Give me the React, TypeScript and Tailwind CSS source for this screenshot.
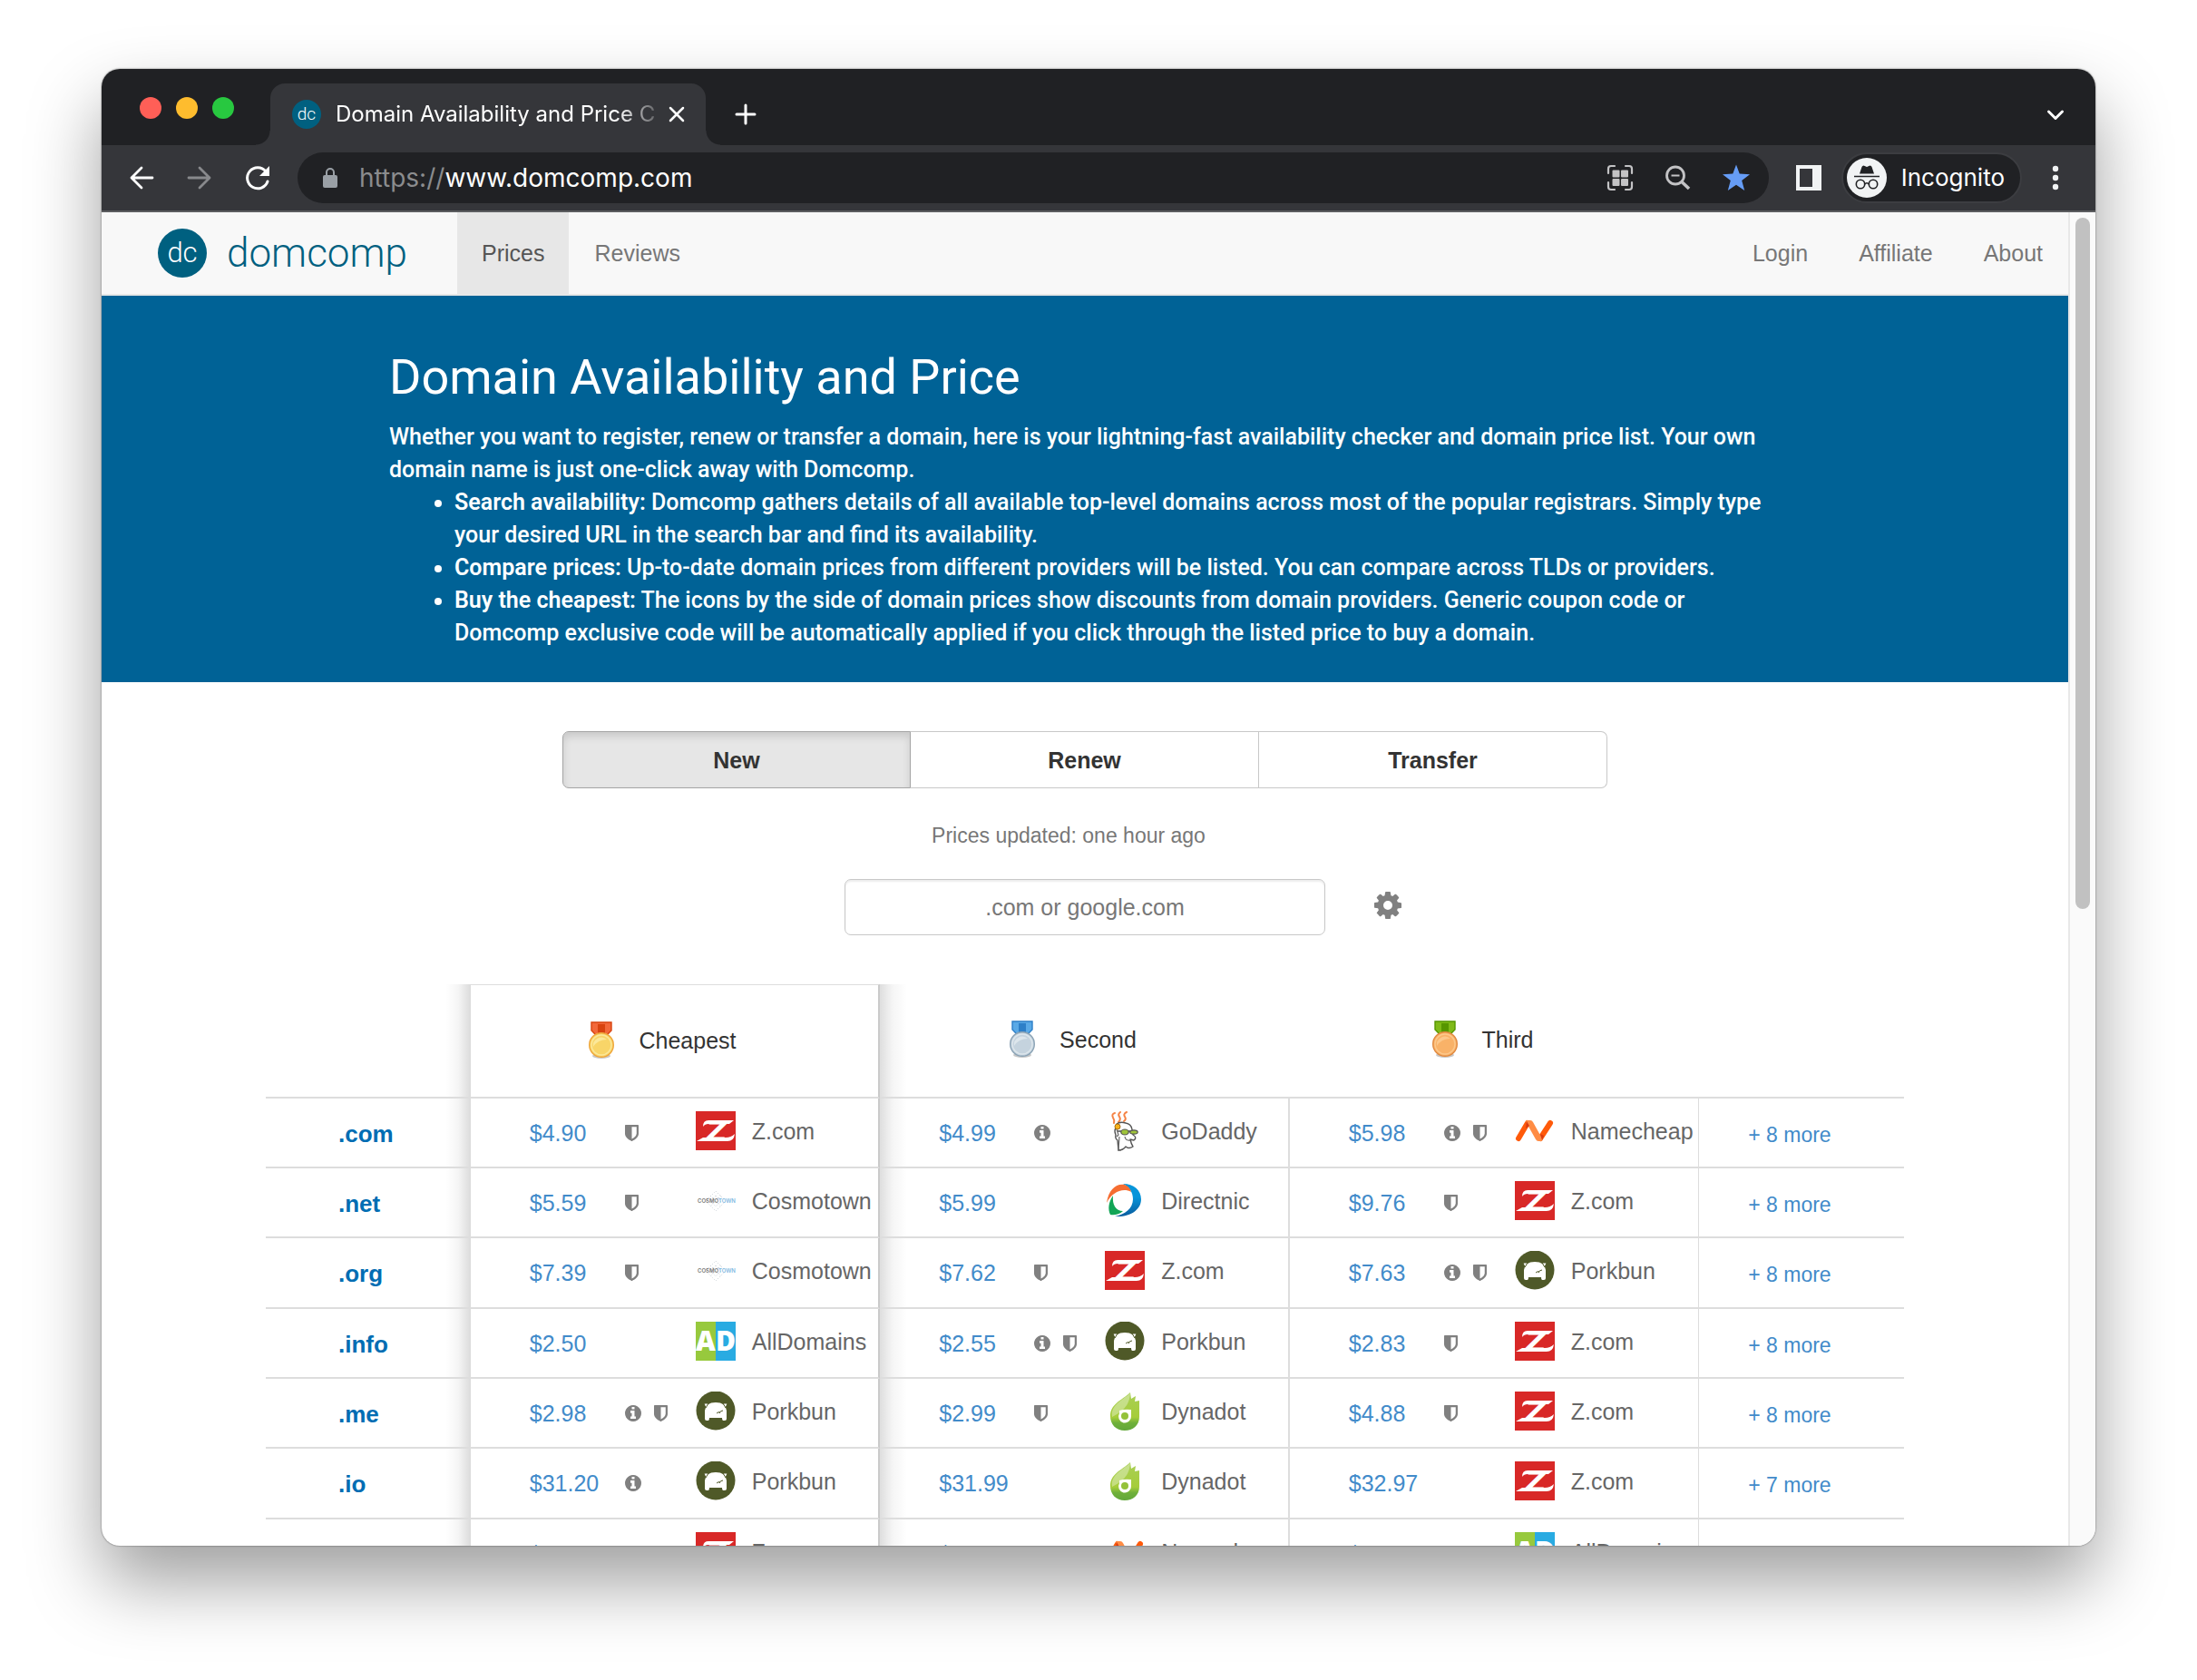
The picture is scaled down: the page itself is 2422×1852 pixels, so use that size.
import React from "react";

type Provider = "Z.com" | "Cosmotown" | "AllDomains" | "Porkbun" | "GoDaddy" | "Directnic" | "Dynadot" | "Namecheap";
type Offer = { price: string; info?: boolean; shield?: boolean; by: Provider };
type Row = { tld: string; offers: Offer[]; more: string };

const rows: Row[] = [
  {
    tld: ".com",
    offers: [
      { price: "$4.90", shield: true, by: "Z.com" },
      { price: "$4.99", info: true, by: "GoDaddy" },
      { price: "$5.98", info: true, shield: true, by: "Namecheap" },
    ],
    more: "+ 8 more",
  },
  {
    tld: ".net",
    offers: [
      { price: "$5.59", shield: true, by: "Cosmotown" },
      { price: "$5.99", by: "Directnic" },
      { price: "$9.76", shield: true, by: "Z.com" },
    ],
    more: "+ 8 more",
  },
  {
    tld: ".org",
    offers: [
      { price: "$7.39", shield: true, by: "Cosmotown" },
      { price: "$7.62", shield: true, by: "Z.com" },
      { price: "$7.63", info: true, shield: true, by: "Porkbun" },
    ],
    more: "+ 8 more",
  },
  {
    tld: ".info",
    offers: [
      { price: "$2.50", by: "AllDomains" },
      { price: "$2.55", info: true, shield: true, by: "Porkbun" },
      { price: "$2.83", shield: true, by: "Z.com" },
    ],
    more: "+ 8 more",
  },
  {
    tld: ".me",
    offers: [
      { price: "$2.98", info: true, shield: true, by: "Porkbun" },
      { price: "$2.99", shield: true, by: "Dynadot" },
      { price: "$4.88", shield: true, by: "Z.com" },
    ],
    more: "+ 8 more",
  },
  {
    tld: ".io",
    offers: [
      { price: "$31.20", info: true, by: "Porkbun" },
      { price: "$31.99", by: "Dynadot" },
      { price: "$32.97", by: "Z.com" },
    ],
    more: "+ 7 more",
  },
  {
    tld: ".biz",
    offers: [
      { price: "$4.99", by: "Z.com" },
      { price: "$4.99", by: "Namecheap" },
      { price: "$8.99", by: "AllDomains" },
    ],
    more: "+ 8 more",
  },
];

const ZLogo = () => (
  <svg viewBox="0 0 44 44" className="size-11">
    <rect width="44" height="43" fill="#d82827" />
    <text x="23" y="33" textAnchor="middle" fontFamily="DejaVu Sans" fontWeight="700" fontStyle="italic" fontSize="32" fill="#fff">
      Z
    </text>
    <path d="M8 17Q8 10 14 10H24V14H14Q10 14 8 17Z" fill="#fff" />
    <path d="M28 10H42L37 14H28Z" fill="#fff" />
    <path d="M1 33 8 29H18V33Z" fill="#fff" />
    <path d="M24 29H33Q39 29 43 25Q42 33 35 33H24Z" fill="#fff" />
  </svg>
);

const CosmotownLogo = () => (
  <svg viewBox="0 0 44 44" className="size-11">
    <g fill="none" stroke="#c9d0d6" strokeWidth="1" strokeDasharray="1 2">
      <path d="M22 11 33 22 22 33 11 22Z" />
      <path d="M16 16 28 28M28 16 16 28M22 16 28 22 22 28 16 22Z" />
    </g>
    <text x="2" y="24" fontFamily="Inter" fontWeight="600" fontSize="6" fill="#777">
      COSMO
      <tspan fill="#7fb8e2">TOWN</tspan>
    </text>
  </svg>
);

const AllDomainsLogo = () => (
  <svg viewBox="0 0 44 44" className="size-11">
    <rect width="22" height="43" fill="#97c93d" />
    <rect x="22" width="22" height="43" fill="#29abe2" />
    <text x="22" y="32" textAnchor="middle" fontFamily="Open Sans" fontWeight="800" fontSize="30" fill="#fff">
      AD
    </text>
  </svg>
);

const PorkbunLogo = () => (
  <svg viewBox="0 0 44 44" className="size-11">
    <circle cx="22" cy="21" r="21.5" fill="#4f5928" />
    <path d="M10 21Q11 12 22 12 33 12 34 21V30Q34 32 32 32H30Q29 32 29 29H15Q15 32 14 32H12Q10 32 10 30Z" fill="#fff" />
    <path d="M23 24q2-2 4-1M26 24q1-3 4-3" fill="none" stroke="#4f5928" strokeWidth="1" />
    <path d="M9 13 14 13 11 18ZM35 13 30 13 33 18Z" fill="#fff" stroke="#4f5928" strokeWidth="1" />
  </svg>
);

const GoDaddyLogo = () => (
  <svg viewBox="0 0 44 44" className="size-11">
    <g fill="none" stroke="#f58345" strokeWidth="2" strokeLinecap="round">
      <path d="M11 2q-4 1-2 5 2 3 1 6" />
      <path d="M17 1q-3 2-1 5 2 3-1 6" />
      <path d="M24 1q-4 2-2 5 2 3-1 5" />
    </g>
    <path
      d="M13 14Q17 11 23 13 29 14 30 20L31 26Q36 29 32 32L28 31Q29 36 31 39 26 42 23 39 20 43 15 43L14 32Q11 30 12 26 10 22 12 18Z"
      fill="#fff"
      stroke="#555"
      strokeWidth="1.4"
      strokeLinejoin="round"
    />
    <path d="M22 28q1 5 6 4M16 28l-1 14M14 43h4M13 20l2 6-2 2" fill="none" stroke="#666" strokeWidth="1.2" />
    <path d="M14 22h22" stroke="#555" strokeWidth="1.6" />
    <ellipse cx="22" cy="23" rx="4.2" ry="3" fill="#9fc43a" stroke="#555" strokeWidth="1.2" />
    <ellipse cx="32" cy="23" rx="4.2" ry="2.2" fill="#9fc43a" stroke="#555" strokeWidth="1.2" />
    <circle cx="14" cy="17" r="3" fill="#f6b21b" stroke="#a86d10" strokeWidth="1" />
  </svg>
);

const DirectnicLogo = () => (
  <svg viewBox="0 0 44 44" className="size-11">
    <defs>
      <linearGradient id="dn-blue" x1="0" y1="0" x2="0" y2="1">
        <stop offset="0.4" stopColor="#0795da" />
        <stop offset="1" stopColor="#0a5c9e" />
      </linearGradient>
    </defs>
    <path d="M20 3C32 3 40 10 40 20 40 31 29 40 11 39 22 37 31 30 31 20 31 12 27 7 20 3Z" fill="url(#dn-blue)" />
    <path d="M2 24C4 9 13 2 22 4 26 6 28 8 29 12 20 7 8 12 2 24Z" fill="#f66d31" />
    <path d="M9 16C8 26 12 33 20 33 16 37 10 38 6 37 3 31 4 23 9 16Z" fill="#12a556" />
  </svg>
);

const DynadotLogo = () => (
  <svg viewBox="0 0 44 44" className="size-11">
    <defs>
      <linearGradient id="dd-drop" x1="0" y1="0" x2="0" y2="1">
        <stop offset="0" stopColor="#a9cf55" />
        <stop offset="0.65" stopColor="#a6cd3a" />
        <stop offset="0.8" stopColor="#6fb03a" />
        <stop offset="1" stopColor="#62a73a" />
      </linearGradient>
    </defs>
    <path d="M28 1 29 8 34 5 33 11 38 10V28C38 37 31 43 22 43 12 43 6 36 6 27 6 14 18 10 28 1Z" fill="url(#dd-drop)" />
    <path d="M28 2C27 12 24 20 8 28 6 16 18 10 28 2Z" fill="#fff" fillOpacity="0.35" />
    <path d="M16 21Q22 19 29 20V27A7 7 0 1 1 16 24Z" fill="#fff" />
    <circle cx="22" cy="27" r="4" fill="#94c23a" />
  </svg>
);

const NamecheapLogo = () => (
  <svg viewBox="0 0 44 44" className="size-11">
    <g fill="none" strokeLinecap="round" strokeWidth="6">
      <path d="M28 30 39 13" stroke="#ff5a0a" />
      <path d="M4 30 14 13" stroke="#ff5a0a" />
    </g>
    <path d="M12 10H17Q19 10 20 12L30 30Q31 33 29 33H26Q24 33 23 31L14 15Q12 12 12 10Z" fill="#ff8c44" />
    <path d="M13 11 16 16 12 19Z" fill="#d93b12" />
    <path d="M32 27 28 25 30 32Z" fill="#d93b12" />
  </svg>
);

const logos: Record<Provider, () => React.ReactElement> = {
  "Z.com": ZLogo,
  Cosmotown: CosmotownLogo,
  AllDomains: AllDomainsLogo,
  Porkbun: PorkbunLogo,
  GoDaddy: GoDaddyLogo,
  Directnic: DirectnicLogo,
  Dynadot: DynadotLogo,
  Namecheap: NamecheapLogo,
};

const InfoIcon = () => (
  <svg viewBox="128 128 1536 1536" className="size-[18px] fill-[#808080]">
    <path d="M1152 1376v-160q0-14-9-23t-23-9h-96v-512q0-14-9-23t-23-9h-320q-14 0-23 9t-9 23v160q0 14 9 23t23 9h96v320h-96q-14 0-23 9t-9 23v160q0 14 9 23t23 9h448q14 0 23-9t9-23zm-128-896v-160q0-14-9-23t-23-9h-192q-14 0-23 9t-9 23v160q0 14 9 23t23 9h192q14 0 23-9t9-23zm640 416q0 209-103 385.5t-279.5 279.5-385.5 103-385.5-103-279.5-279.5-103-385.5 103-385.5 279.5-279.5 385.5-103 385.5 103 279.5 279.5 103 385.5z" />
  </svg>
);

const ShieldIcon = () => (
  <svg viewBox="256 128 1280 1536" className="h-[18px] w-[15px] fill-[#808080]">
    <path d="M1344 960v-640h-448v1137q119-63 213-137 235-184 235-360zm192-768v768q0 86-33.5 170.5t-83 150-118 127.5-126.5 103-121 77.5-89.5 49.5-42.5 20q-12 6-26 6t-26-6q-16-7-42.5-20t-89.5-49.5-121-77.5-126.5-103-118-127.5-83-150-33.5-170.5v-768q0-26 19-45t45-19h1152q26 0 45 19t19 45z" />
  </svg>
);

const GearIcon = () => (
  <svg viewBox="0 128 1536 1536" className="size-[30px] fill-[#808080]">
    <path d="M1024 896q0-106-75-181t-181-75-181 75-75 181 75 181 181 75 181-75 75-181zm512-109v222q0 12-8 23t-20 13l-185 28q-19 54-39 91 35 50 107 138 10 12 10 25t-9 23q-27 37-99 108t-94 71q-12 0-26-9l-138-108q-44 23-91 38-16 136-29 186-7 28-36 28h-222q-14 0-24.500-8.500t-11.500-21.500l-28-184q-49-16-90-37l-141 107q-10 9-25 9-14 0-25-11-126-114-165-168-7-10-7-23 0-12 8-23 15-21 51-66.500t54-70.500q-27-50-41-99l-183-27q-13-2-21-12.500t-8-23.500v-222q0-12 8-23t19-13l186-28q14-46 39-92-40-57-107-138-10-12-10-24 0-10 9-23 26-36 98.500-107.500t94.500-71.500q13 0 26 10l138 107q44-23 91-38 16-136 29-186 7-28 36-28h222q14 0 24.500 8.500t11.500 21.500l28 184q49 16 90 37l142-107q9-9 24-9 13 0 25 10 129 119 165 170 7 8 7 22 0 12-8 23-15 21-51 66.500t-54 70.500q26 50 41 98l183 28q13 2 21 12.500t8 23.500z" />
  </svg>
);

type MedalColors = { ribbon: string; ribbonDark: string; disc: string; discLight: string; rim: string };

const Medal = ({ ribbon, ribbonDark, disc, discLight, rim }: MedalColors) => (
  <svg viewBox="0 0 30 42" className="h-[42px] w-[30px]">
    <ellipse cx="15" cy="38" rx="10" ry="3" fill="#000" fillOpacity="0.22" />
    <path d="M4 1H26V10L21 15H9L4 10Z" fill={ribbon} stroke={ribbonDark} strokeWidth="1.4" />
    <rect x="11" y="3" width="8" height="10" fill={ribbonDark} />
    <circle cx="15" cy="26" r="13.3" fill={disc} stroke={rim} strokeWidth="1.4" />
    <circle cx="15" cy="26" r="11" fill={disc} stroke={discLight} strokeWidth="1.4" />
    <path d="M6 28A9 9 0 0 1 21 20Q11 20 6 28Z" fill={discLight} />
  </svg>
);

const medals: { label: string; colors: MedalColors }[] = [
  { label: "Cheapest", colors: { ribbon: "#f2683a", ribbonDark: "#d8430f", disc: "#f8d568", discLight: "#fbe89a", rim: "#efa63c" } },
  { label: "Second", colors: { ribbon: "#5aa9e6", ribbonDark: "#2d7fc8", disc: "#c5d3de", discLight: "#dde6ec", rim: "#8ba3b5" } },
  { label: "Third", colors: { ribbon: "#7fba18", ribbonDark: "#569600", disc: "#f9b268", discLight: "#fcc88c", rim: "#e08a42" } },
];

const columnEdge = [
  "border-r-2 border-r-[#cacaca]",
  "border-r-2 border-r-[#dddddd] bg-[linear-gradient(to_right,rgba(0,0,0,0.13),rgba(0,0,0,0.04)_14px,transparent_30px)]",
  "border-r border-r-[#dddddd]",
];

const OfferCell = ({ offer, edge }: { offer: Offer; edge: string }) => {
  const Logo = logos[offer.by];
  return (
    <td className={`border-b-2 border-b-[#dddddd] p-0 align-middle ${edge}`}>
      <div className="flex items-center">
        <a href="#price" className="w-[170px] shrink-0 pl-[65px] text-[25px] leading-[36px] text-[#428bca]">
          {offer.price}
        </a>
        <span className="flex w-[78px] shrink-0 items-center gap-[14px]">
          {offer.info && <InfoIcon />}
          {offer.shield && <ShieldIcon />}
        </span>
        <span className="flex items-center gap-[18px] pb-[4px] text-[25px] leading-[44px] text-[#666666]">
          <Logo />
          {offer.by}
        </span>
      </div>
    </td>
  );
};

const TabStrip = () => (
  <div className="flex h-[84px] items-end bg-[#202124]">
    <div className="flex w-[186px] shrink-0 items-center gap-4 self-center pt-[2px] pl-[42px]">
      <button aria-label="Close window" className="size-6 rounded-full bg-[#ff5f57]" />
      <button aria-label="Minimise window" className="size-6 rounded-full bg-[#febc2e]" />
      <button aria-label="Zoom window" className="size-6 rounded-full bg-[#28c840]" />
    </div>
    <div className="relative flex h-[68px] w-[480px] items-center rounded-t-[16px] bg-[#35363a] pl-6">
      <span className="absolute bottom-0 -left-4 size-4 bg-[radial-gradient(circle_at_0_0,#202124_15px,#35363a_16px)]" />
      <span className="absolute -right-4 bottom-0 size-4 bg-[radial-gradient(circle_at_100%_0,#202124_15px,#35363a_16px)]" />
      <span className="flex size-8 shrink-0 items-center justify-center rounded-full bg-[#006080] font-[Roboto] text-[19px] leading-6 font-light text-white">
        dc
      </span>
      <span className="ml-4 w-[352px] overflow-hidden font-[Inter] text-[24px] leading-8 whitespace-nowrap text-white [mask-image:linear-gradient(to_right,black_310px,transparent_366px)]">
        Domain Availability and Price C
      </span>
      <button aria-label="Close tab" className="ml-[14px]">
        <svg viewBox="0 0 20 20" className="size-5 stroke-white" strokeWidth="2.5" strokeLinecap="round">
          <path d="M3 3 17 17M17 3 3 17" />
        </svg>
      </button>
    </div>
    <button aria-label="New tab" className="mb-[22px] ml-8">
      <svg viewBox="0 0 24 24" className="size-6 stroke-white" strokeWidth="3" strokeLinecap="round">
        <path d="M12 2V22M2 12H22" />
      </svg>
    </button>
    <button aria-label="Search tabs" className="mr-[32px] mb-[22px] ml-auto">
      <svg viewBox="0 0 24 24" className="size-6 fill-none stroke-white" strokeWidth="3" strokeLinecap="round" strokeLinejoin="round">
        <path d="M4.5 9 12 16.500 19.500 9" />
      </svg>
    </button>
  </div>
);

const Toolbar = () => (
  <div className="flex h-[74px] items-center border-b-2 border-[#5c5d60] bg-[#35363a]">
    <div className="flex w-[216px] shrink-0 items-center gap-8 pl-7">
      <button aria-label="Back">
        <svg viewBox="0 0 32 32" className="size-8 fill-none stroke-white" strokeWidth="2.8" strokeLinecap="round" strokeLinejoin="round">
          <path d="M28 16H5M16 5 5 16 16 27" />
        </svg>
      </button>
      <button aria-label="Forward">
        <svg viewBox="0 0 32 32" className="size-8 fill-none stroke-[#88898c]" strokeWidth="2.8" strokeLinecap="round" strokeLinejoin="round">
          <path d="M4 16H27M16 5 27 16 16 27" />
        </svg>
      </button>
      <button aria-label="Reload">
        <svg viewBox="0 0 32 32" className="size-8">
          <path d="M27 20A11.500 11.500 0 1 1 25 9" fill="none" stroke="#fff" strokeWidth="3" strokeLinecap="round" />
          <path d="M29 3V14H18Z" fill="#fff" />
        </svg>
      </button>
    </div>
    <div className="flex h-14 flex-1 items-center rounded-full bg-[#202124] pr-5 pl-7">
      <svg viewBox="0 0 16 22" className="mr-6 h-[22px] w-4">
        <rect y="8" width="16" height="14" rx="2" fill="#9aa0a6" />
        <path d="M4 9V5A4 4 0 0 1 12 5V9" fill="none" stroke="#9aa0a6" strokeWidth="2" />
      </svg>
      <label htmlFor="address" className="font-[Inter] text-[28px] leading-10 text-[#8b8c8e]">
        https://
      </label>
      <input
        id="address"
        defaultValue="www.domcomp.com"
        className="min-w-0 flex-1 bg-transparent font-[Inter] text-[28px] leading-10 text-white outline-none"
      />
      <div className="flex items-center gap-8">
        <button aria-label="Scan page">
          <svg viewBox="0 0 32 32" className="size-8 text-[#c3c3c5]">
            <path d="M10 3H6Q3 3 3 6V11M22 3H26Q29 3 29 6V11M10 29H6Q3 29 3 26V21M22 29H26Q29 29 29 26V21" fill="none" stroke="currentColor" strokeWidth="2.2" strokeLinecap="round" />
            <g fill="currentColor">
              <rect x="7.5" y="7.5" width="8" height="8" rx="1" />
              <rect x="17" y="7.5" width="8" height="8" rx="1" />
              <rect x="7.5" y="17" width="8" height="8" rx="1" />
              <rect x="17" y="17" width="8" height="8" rx="1" />
            </g>
          </svg>
        </button>
        <button aria-label="Zoom">
          <svg viewBox="0 0 32 32" className="size-8 fill-none stroke-[#c3c3c5]">
            <circle cx="13" cy="13.5" r="9.5" strokeWidth="2.8" />
            <path d="M20 20.500 28 28" strokeWidth="3.6" />
            <path d="M8.500 13.500H17.500" strokeWidth="2" />
          </svg>
        </button>
        <button aria-label="Bookmark">
          <svg viewBox="0 0 32 32" className="size-8 fill-[#669df6]">
            <path d="M16 1.500 19.700 11.600 31 12.200 22.200 19 25.200 30 16 23.800 6.800 30 9.800 19 1 12.200 12.300 11.600Z" />
          </svg>
        </button>
      </div>
    </div>
    <button aria-label="Side panel" className="ml-[30px]">
      <svg viewBox="0 0 28 28" className="size-7">
        <path d="M0 0H28V28H0ZM4 4V24H18V4Z" fillRule="evenodd" fill="#f1f3f4" />
      </svg>
    </button>
    <button className="ml-[22px] flex h-14 items-center gap-4 rounded-full border-2 border-[#3c3d41] bg-[#202124] pr-[17px] pl-[4px] font-[Inter] text-[26px] leading-8 text-white">
      <svg viewBox="0 0 44 44" className="size-11">
        <circle cx="22" cy="22" r="22" fill="#f1f3f4" />
        <path d="M14 17.500 16.500 10Q17 8.500 18.500 8.500L22 10 25.500 8.500Q27 8.500 27.500 10L30 17.500Z" fill="#202124" />
        <path d="M8 20.500H36" stroke="#202124" strokeWidth="1.6" />
        <g fill="none" stroke="#202124" strokeWidth="1.6">
          <circle cx="15" cy="29" r="4.7" />
          <circle cx="29" cy="29" r="4.7" />
          <path d="M19.700 29Q22 26.500 24.300 29" />
        </g>
      </svg>
      Incognito
    </button>
    <button aria-label="Menu" className="mr-[28px] ml-auto pl-[21px]">
      <svg viewBox="0 0 32 32" className="size-8 fill-[#f1f3f4]">
        <circle cx="16" cy="6" r="3.2" />
        <circle cx="16" cy="16" r="3.2" />
        <circle cx="16" cy="26" r="3.2" />
      </svg>
    </button>
  </div>
);

const SiteNav = () => (
  <nav className="flex h-[92px] border-b-2 border-[#e7e7e7] bg-[#f8f8f8] text-[25px] leading-[36px] text-[#777777]">
    <a href="#home" className="flex w-[392px] items-center gap-[22px] pl-[62px] font-[Roboto] font-light">
      <span className="flex size-[54px] items-center justify-center rounded-full bg-[#006080] text-[31px] text-white">dc</span>
      <span className="text-[44px] leading-[54px] text-[#006080]">domcomp</span>
    </a>
    <a href="#prices" className="flex items-center bg-[#e7e7e7] px-[27px] text-[#555555]">
      Prices
    </a>
    <a href="#reviews" className="flex items-center px-[28px]">
      Reviews
    </a>
    <div className="ml-auto flex">
      <a href="#login" className="flex items-center px-[28px]">
        Login
      </a>
      <a href="#affiliate" className="flex items-center px-[28px]">
        Affiliate
      </a>
      <a href="#about" className="flex items-center px-[28px]">
        About
      </a>
    </div>
  </nav>
);

const Hero = () => (
  <section className="bg-[#006296] px-8 pt-[60px] pb-[36px] font-[Roboto] text-white">
    <div className="mx-auto max-w-[1534px] text-[25px] leading-[36px] font-medium">
      <h1 className="mb-[18px] text-[54px] leading-[60px] font-normal">Domain Availability and Price</h1>
      <p>
        Whether you want to register, renew or transfer a domain, here is your lightning-fast availability checker and domain
        price list. Your own domain name is just one-click away with Domcomp.
      </p>
      <ul className="list-disc pl-[72px]">
        <li>
          <b className="font-semibold">Search availability:</b> Domcomp gathers details of all available top-level domains across
          most of the popular registrars. Simply type your desired URL in the search bar and find its availability.
        </li>
        <li>
          <b className="font-semibold">Compare prices:</b> Up-to-date domain prices from different providers will be listed. You
          can compare across TLDs or providers.
        </li>
        <li>
          <b className="font-semibold">Buy the cheapest:</b> The icons by the side of domain prices show discounts from domain
          providers. Generic coupon code or Domcomp exclusive code will be automatically applied if you click through the listed
          price to buy a domain.
        </li>
      </ul>
    </div>
  </section>
);

const Search = () => (
  <section className="pt-[54px]">
    <div className="mx-auto grid h-[63px] max-w-[1152px] grid-cols-3 text-[25px] leading-[36px] font-bold text-[#333333]">
      <button
        aria-pressed="true"
        className="rounded-l-[7px] border border-[#a5a5a5] bg-[#e6e6e6] shadow-[inset_0_5px_9px_rgba(0,0,0,0.125)]"
      >
        New
      </button>
      <button aria-pressed="false" className="border-y border-r border-[#c8c8c8] bg-white">
        Renew
      </button>
      <button aria-pressed="false" className="rounded-r-[7px] border-y border-r border-[#c8c8c8] bg-white">
        Transfer
      </button>
    </div>
    <p className="mt-[34px] pr-9 text-center text-[23px] leading-[36px] text-[#777777]">Prices updated: one hour ago</p>
    <div className="mt-[30px] grid grid-cols-[1fr_530px_1fr] items-center">
      <input
        aria-label="Search domains"
        placeholder=".com or google.com"
        className="col-start-2 h-[62px] rounded-[7px] border border-[#c8c8c8] bg-white text-center text-[25px] leading-[36px] shadow-[inset_0_2px_2px_rgba(0,0,0,0.075)] placeholder:text-[#777777]"
      />
      <button aria-label="Settings" className="mb-[4px] ml-[54px] justify-self-start">
        <GearIcon />
      </button>
    </div>
  </section>
);

const PriceTable = () => (
  <table className="mx-auto mt-[54px] w-full max-w-[1806px] table-fixed border-separate border-spacing-0 text-left">
    <colgroup>
      <col className="w-[12.5%]" />
      <col className="w-1/4" />
      <col className="w-1/4" />
      <col className="w-1/4" />
      <col className="w-[12.5%]" />
    </colgroup>
    <thead>
      <tr className="h-[126px]">
        <td className="border-b-2 border-[#dddddd] bg-[linear-gradient(to_left,rgba(0,0,0,0.14),rgba(0,0,0,0.04)_14px,transparent_28px)]" />
        {medals.map(({ label, colors }, i) => (
          <th
            key={label}
            scope="col"
            className={
              i === 0
                ? "border-t border-r-2 border-b-2 border-[#dddddd] border-r-[#cacaca] p-0 font-normal"
                : i === 1
                  ? "border-b-2 border-[#dddddd] bg-[linear-gradient(to_right,rgba(0,0,0,0.13),rgba(0,0,0,0.04)_14px,transparent_30px)] p-0 font-normal"
                  : "border-b-2 border-[#dddddd] p-0 font-normal"
            }
          >
            <span className="flex items-center justify-center gap-[26px] pr-[27px] pb-[2px] text-[25px] leading-[42px] text-[#333333]">
              <Medal {...colors} />
              {label}
            </span>
          </th>
        ))}
        <td className="border-b-2 border-[#dddddd]" />
      </tr>
    </thead>
    <tbody>
      {rows.map((row) => (
        <tr key={row.tld} className="h-[77px] nth-[3n]:h-[78px]">
          <th
            scope="row"
            className="border-b-2 border-[#dddddd] bg-[linear-gradient(to_left,rgba(0,0,0,0.14),rgba(0,0,0,0.04)_14px,transparent_28px)] p-0 pt-[2px] pl-[80px] text-[26px] leading-[36px] font-bold"
          >
            <a href="#tld" className="text-[#006db3]">
              {row.tld}
            </a>
          </th>
          {row.offers.map((offer, i) => (
            <OfferCell key={i} offer={offer} edge={columnEdge[i]} />
          ))}
          <td className="border-b-2 border-[#dddddd] p-0 pt-[4px] pl-[54px] text-[23px] leading-[36px]">
            <a href="#more" className="text-[#428bca]">
              {row.more}
            </a>
          </td>
        </tr>
      ))}
    </tbody>
  </table>
);

export default function App() {
  return (
    <div className="flex h-screen flex-col overflow-hidden bg-white px-28 pt-[76px] pb-[148px] font-['Liberation_Sans',Arial,sans-serif]">
      <div className="flex min-h-0 flex-1 flex-col overflow-hidden rounded-[20px] bg-white shadow-[0_0_2px_rgba(0,0,0,0.6),0_40px_80px_rgba(0,0,0,0.38)]">
        <TabStrip />
        <Toolbar />
        <div className="flex min-h-0 flex-1">
          <main className="min-w-0 flex-1 overflow-hidden">
            <SiteNav />
            <Hero />
            <Search />
            <PriceTable />
          </main>
          <div className="w-[30px] shrink-0 border-l-2 border-[#e8e8e8] bg-[#fafafa] pt-[6px] pl-[6px]">
            <div className="h-[762px] w-4 rounded-full bg-[#c1c1c1]" />
          </div>
        </div>
      </div>
    </div>
  );
}
